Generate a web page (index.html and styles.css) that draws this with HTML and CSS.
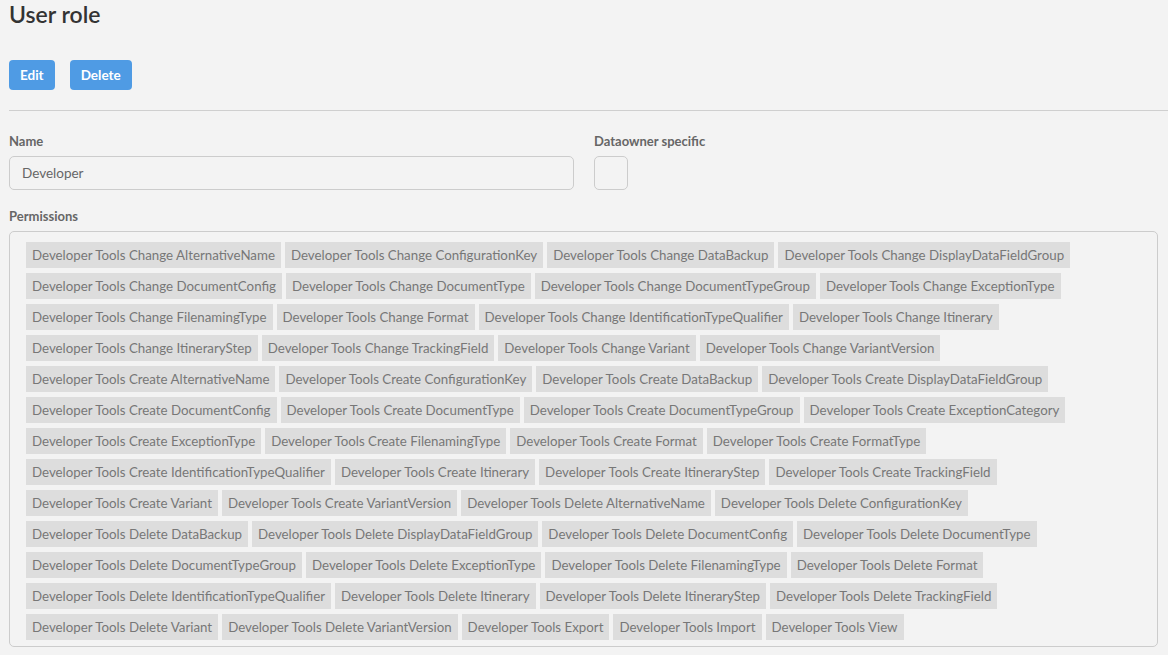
FILE: index.html
```html
<!DOCTYPE html>
<html lang="en">
<head>
  <meta charset="UTF-8" />
  <title>User role</title>
  <link rel="stylesheet" href="styles.css">
</head>
<body>
  <div class="page">
    <h1 class="page-title">User role</h1>

    <div class="actions">
      <button class="btn">Edit</button>
      <button class="btn">Delete</button>
    </div>

    <hr class="divider" />

    <div class="form-row">
      <div class="field field-name">
        <label class="field-label">Name</label>
        <div class="text-box">Developer</div>
      </div>
      <div class="field">
        <label class="field-label">Dataowner specific</label>
        <div class="check-box"></div>
      </div>
    </div>

    <div class="field field-perms">
      <label class="field-label">Permissions</label>
      <div class="tag-box">
        <span class="tag">Developer Tools Change AlternativeName</span>
        <span class="tag">Developer Tools Change ConfigurationKey</span>
        <span class="tag">Developer Tools Change DataBackup</span>
        <span class="tag">Developer Tools Change DisplayDataFieldGroup</span>
        <span class="tag">Developer Tools Change DocumentConfig</span>
        <span class="tag">Developer Tools Change DocumentType</span>
        <span class="tag">Developer Tools Change DocumentTypeGroup</span>
        <span class="tag">Developer Tools Change ExceptionType</span>
        <span class="tag">Developer Tools Change FilenamingType</span>
        <span class="tag">Developer Tools Change Format</span>
        <span class="tag">Developer Tools Change IdentificationTypeQualifier</span>
        <span class="tag">Developer Tools Change Itinerary</span>
        <span class="tag">Developer Tools Change ItineraryStep</span>
        <span class="tag">Developer Tools Change TrackingField</span>
        <span class="tag">Developer Tools Change Variant</span>
        <span class="tag">Developer Tools Change VariantVersion</span>
        <span class="tag">Developer Tools Create AlternativeName</span>
        <span class="tag">Developer Tools Create ConfigurationKey</span>
        <span class="tag">Developer Tools Create DataBackup</span>
        <span class="tag">Developer Tools Create DisplayDataFieldGroup</span>
        <span class="tag">Developer Tools Create DocumentConfig</span>
        <span class="tag">Developer Tools Create DocumentType</span>
        <span class="tag">Developer Tools Create DocumentTypeGroup</span>
        <span class="tag">Developer Tools Create ExceptionCategory</span>
        <span class="tag">Developer Tools Create ExceptionType</span>
        <span class="tag">Developer Tools Create FilenamingType</span>
        <span class="tag">Developer Tools Create Format</span>
        <span class="tag">Developer Tools Create FormatType</span>
        <span class="tag">Developer Tools Create IdentificationTypeQualifier</span>
        <span class="tag">Developer Tools Create Itinerary</span>
        <span class="tag">Developer Tools Create ItineraryStep</span>
        <span class="tag">Developer Tools Create TrackingField</span>
        <span class="tag">Developer Tools Create Variant</span>
        <span class="tag">Developer Tools Create VariantVersion</span>
        <span class="tag">Developer Tools Delete AlternativeName</span>
        <span class="tag">Developer Tools Delete ConfigurationKey</span>
        <span class="tag">Developer Tools Delete DataBackup</span>
        <span class="tag">Developer Tools Delete DisplayDataFieldGroup</span>
        <span class="tag">Developer Tools Delete DocumentConfig</span>
        <span class="tag">Developer Tools Delete DocumentType</span>
        <span class="tag">Developer Tools Delete DocumentTypeGroup</span>
        <span class="tag">Developer Tools Delete ExceptionType</span>
        <span class="tag">Developer Tools Delete FilenamingType</span>
        <span class="tag">Developer Tools Delete Format</span>
        <span class="tag">Developer Tools Delete IdentificationTypeQualifier</span>
        <span class="tag">Developer Tools Delete Itinerary</span>
        <span class="tag">Developer Tools Delete ItineraryStep</span>
        <span class="tag">Developer Tools Delete TrackingField</span>
        <span class="tag">Developer Tools Delete Variant</span>
        <span class="tag">Developer Tools Delete VariantVersion</span>
        <span class="tag">Developer Tools Export</span>
        <span class="tag">Developer Tools Import</span>
        <span class="tag">Developer Tools View</span>
      </div>
    </div>
  </div>
</body>
</html>
```

FILE: styles.css
```css
body {
  margin: 0;
  background: #f3f3f3;
  font-family: Lato, "Noto Sans", sans-serif;
  color: #333;
  overflow: hidden;
}

.page {
  padding: 0 10px 0 9px;
}

.page-title {
  margin: 0;
  padding-top: 1px;
  font-size: 23px;
  font-weight: 600;
  line-height: 26px;
  color: #333;
}

/* buttons */
.actions {
  display: flex;
  gap: 15px;
  margin-top: 33px;
}

.btn {
  height: 30px;
  padding: 0 11px;
  border: none;
  border-radius: 4px;
  background: #4f9be4;
  color: #fff;
  font-family: inherit;
  font-size: 13.5px;
  font-weight: 700;
}

.divider {
  margin: 20px -10px 0 0;
  border: none;
  border-top: 1px solid #cfcfcf;
}

/* form */
.form-row {
  display: flex;
  gap: 20px;
  margin-top: 21px;
}

.field-name {
  width: 565px;
}

.field-label {
  display: block;
  font-size: 13px;
  font-weight: 700;
  color: #666;
  line-height: 18px;
  margin-bottom: 6px;
}

.text-box {
  height: 34px;
  box-sizing: border-box;
  border: 1px solid #ccc;
  border-radius: 5px;
  padding: 0 12px;
  line-height: 32px;
  font-size: 13.5px;
  color: #666;
}

.check-box {
  width: 34px;
  height: 34px;
  box-sizing: border-box;
  border: 1px solid #ccc;
  border-radius: 5px;
}

.field-perms {
  margin-top: 17px;
}

/* permissions */
.tag-box {
  display: flex;
  flex-wrap: wrap;
  gap: 5px 4px;
  padding: 10px 16px 6px;
  border: 1px solid #ccc;
  border-radius: 5px;
}

.tag {
  height: 26px;
  line-height: 26px;
  padding: 0 6px;
  background: #dddddd;
  color: #777;
  font-size: 13.3px;
  white-space: nowrap;
}
```
